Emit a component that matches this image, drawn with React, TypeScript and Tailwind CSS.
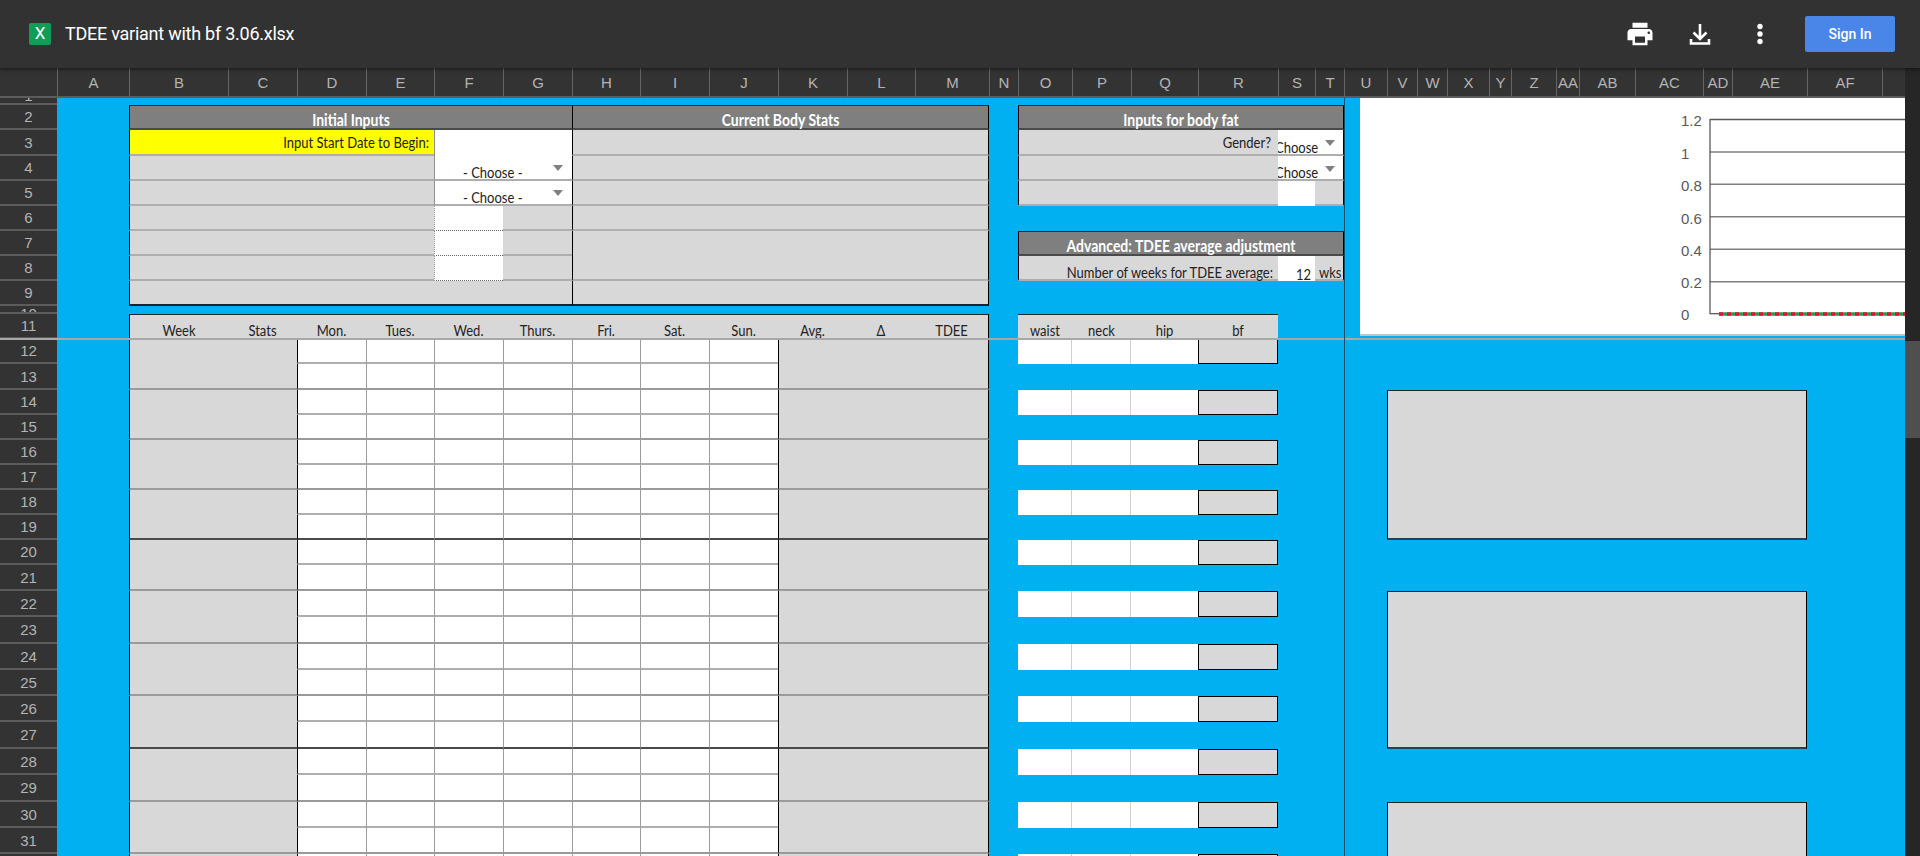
import React from "react";

const COLS =
  "grid-cols-[57px_72px_99px_69px_69px_68px_69px_69px_68px_69px_69px_69px_68px_74px_29px_54px_59px_67px_80px_37px_29px_43px_30px_30px_42px_22px_45px_23px_56px_68px_29px_75px_75px_23px]";
const ROWS =
  "grid-rows-[7px_25px_26px_25px_25px_25px_25px_25px_25px_8px_25px_25px_26px_25px_25px_25px_25px_25px_25px_25px_26px_26px_27px_26px_26px_26px_27px_26px_27px_26px_26px_26px]";

const LETTERS = ["A","B","C","D","E","F","G","H","I","J","K","L","M","N","O","P","Q","R","S","T","U","V","W","X","Y","Z","AA","AB","AC","AD","AE","AF",""];

const LIGHT = "bg-[#d8d8d8]";
const HEAD = "bg-[#7f7f7f]";
const WHITE = "bg-white";
const LINE = "border-b-2 border-b-[#aeaeae]";
const L_BLACK = "border-l border-l-black";
const R_BLACK = "border-r border-r-black";
const T_DARK = "border-t border-t-[#1c2a30]";
const B_DARK = "border-b-2 border-b-[#4a4a4a]";

function Txt({ children, className = "text-[13px]" }: { children: React.ReactNode; className?: string }) {
  return (
    <span className={"inline-block origin-center scale-y-[1.15] whitespace-nowrap font-['Lato',sans-serif] leading-none " + className}>
      {children}
    </span>
  );
}

function Title({ children }: { children: React.ReactNode }) {
  return (
    <div className="flex h-full items-end justify-center pb-[1px]">
      <Txt className="text-[14px] font-bold text-white">{children}</Txt>
    </div>
  );
}

function Caret({ className }: { className: string }) {
  return <span className={"absolute h-0 w-0 border-x-[5px] border-t-[6px] border-x-transparent border-t-[#808080] " + className} />;
}

function WideSelect({ top }: { top: string }) {
  return (
    <div className="relative flex h-full items-end pl-[28px]">
      <Txt className="text-[13px] text-[#222222]">- Choose -</Txt>
      <Caret className={"right-[9px] " + top} />
    </div>
  );
}

function NarrowSelect() {
  return (
    <div className="relative flex h-full items-end overflow-hidden">
      <Txt className="-ml-[3px] text-[13px] text-[#222222]">Choose</Txt>
      <Caret className="right-[8px] top-[10px]" />
    </div>
  );
}

type Merge = { n: number; span: string; node: React.ReactNode };

const MERGED: Record<string, Merge> = {
  "2-2": { n: 6, span: "col-span-6", node: <Title>Initial Inputs</Title> },
  "2-8": { n: 6, span: "col-span-6", node: <Title>Current Body Stats</Title> },
  "2-15": { n: 6, span: "col-span-6", node: <Title>Inputs for body fat</Title> },
  "3-2": {
    n: 4,
    span: "col-span-4",
    node: (
      <div className="flex h-full items-center justify-end pr-[5px]">
        <Txt className="text-[13px] text-[#222222]">Input Start Date to Begin:</Txt>
      </div>
    ),
  },
  "3-6": { n: 2, span: "col-span-2", node: null },
  "4-6": { n: 2, span: "col-span-2", node: <WideSelect top="top-[9px]" /> },
  "5-6": { n: 2, span: "col-span-2", node: <WideSelect top="top-[9px]" /> },
  "3-15": {
    n: 4,
    span: "col-span-4",
    node: (
      <div className="flex h-full items-center justify-end pr-[7px]">
        <Txt className="text-[13px] text-[#222222]">Gender?</Txt>
      </div>
    ),
  },
  "3-19": { n: 2, span: "col-span-2", node: <NarrowSelect /> },
  "4-15": { n: 4, span: "col-span-4", node: null },
  "4-19": { n: 2, span: "col-span-2", node: <NarrowSelect /> },
  "7-15": { n: 6, span: "col-span-6", node: <Title>Advanced: TDEE average adjustment</Title> },
  "8-15": {
    n: 4,
    span: "col-span-4",
    node: (
      <div className="flex h-full items-end justify-end pr-[5px]">
        <Txt className="text-[13px] text-[#222222]">Number of weeks for TDEE average:</Txt>
      </div>
    ),
  },
  "8-19": {
    n: 1,
    span: "",
    node: (
      <div className="flex h-full items-end justify-end pr-[4px]">
        <Txt className="text-[13px] text-[#222222]">12</Txt>
      </div>
    ),
  },
  "8-20": {
    n: 1,
    span: "",
    node: (
      <div className="flex h-full items-end pl-[4px]">
        <Txt className="text-[13px] text-[#222222]">wks</Txt>
      </div>
    ),
  },
};

const HEADERS: Record<number, string> = {
  2: "Week",
  3: "Stats",
  4: "Mon.",
  5: "Tues.",
  6: "Wed.",
  7: "Thurs.",
  8: "Fri.",
  9: "Sat.",
  10: "Sun.",
  11: "Avg.",
  12: "Δ",
  13: "TDEE",
  15: "waist",
  16: "neck",
  17: "hip",
  18: "bf",
};

function initPanel(r: number, c: number, e: number) {
  const out: string[] = [];
  if (r === 2) out.push(HEAD, T_DARK, B_DARK);
  else if (r === 3 && c === 2) out.push("bg-[#ffff00]");
  else if (c === 6 && r <= 8) out.push(WHITE);
  else out.push(LIGHT);

  if (c === 2 || c === 8) out.push(L_BLACK);
  else if (c === 6 && r >= 3 && r <= 8) out.push("border-l border-l-[#8f8f8f]");
  if (e === 13) out.push(R_BLACK);

  if (r === 9) out.push("border-b-2 border-b-[#16242b]");
  else if (r > 2) {
    if (c === 6 && r >= 6) out.push("border-b border-dotted border-b-[#666666]");
    else if (c === 6 && r === 3) out.push("");
    else if (c >= 8 && r === 7) out.push("");
    else out.push(LINE);
  }
  return out;
}

function weekTable(r: number, c: number) {
  const out: string[] = [];
  if (r === 11) out.push(LIGHT, T_DARK);
  else out.push(c >= 4 && c <= 10 ? WHITE : LIGHT);

  if (c === 2 || (r > 11 && (c === 4 || c === 11))) out.push(L_BLACK);
  else if (r > 11 && c >= 5 && c <= 10) out.push("border-l border-l-[#9c9c9c]");
  if (c === 13) out.push(R_BLACK);

  if (r > 11) {
    if (r === 19 || r === 27) out.push(B_DARK);
    else if (r % 2 === 1) out.push("border-b-2 border-b-[#9a9a9a]");
    else if (c >= 4 && c <= 10) out.push(LINE);
  }
  return out;
}

function fatPanels(r: number, c: number, e: number) {
  const out: string[] = [];
  const head = r === 2 || r === 7;
  if (head) out.push(HEAD, T_DARK, B_DARK);
  else if (c === 19) out.push(WHITE);
  else out.push(LIGHT);
  if (c === 15) out.push(L_BLACK);
  if (e === 20) out.push(R_BLACK);
  if (!head && c !== 19) out.push(LINE);
  if (!head && c === 19 && r < 5) out.push(LINE);
  return out;
}

function waistTable(r: number, c: number) {
  const out: string[] = [];
  if (r === 11) out.push(LIGHT, T_DARK);
  else if (r % 2 === 0) {
    if (c === 18) out.push(LIGHT, "border border-black");
    else if (c === 17) out.push(WHITE);
    else out.push(WHITE, "border-r border-r-[#cfcfcf]");
  }
  return out;
}

function grayBox(r: number, c: number) {
  const ranges: [number, number][] = [[14, 19], [22, 27], [30, 40]];
  const range = ranges.find(([a, b]) => r >= a && r <= b);
  if (!range || c < 22 || c > 31) return [];
  const out = [LIGHT];
  if (c === 22) out.push(L_BLACK);
  if (c === 31) out.push(R_BLACK);
  if (r === range[0]) out.push("border-t border-t-[#16242b]");
  if (r === range[1]) out.push("border-b-2 border-b-[#1d4358]");
  return out;
}

function cellClass(r: number, c: number, e: number) {
  let extra: string[] = [];
  if (r >= 2 && r <= 9 && c >= 2 && c <= 13) extra = initPanel(r, c, e);
  else if (r >= 11 && c >= 2 && c <= 13) extra = weekTable(r, c);
  else if (((r >= 2 && r <= 5) || r === 7 || r === 8) && c >= 15 && c <= 20) extra = fatPanels(r, c, e);
  else if (r >= 11 && c >= 15 && c <= 18) extra = waistTable(r, c);
  else extra = grayBox(r, c);
  return extra.join(" ");
}

function sheetCells() {
  const cells: React.ReactNode[] = [];
  for (let r = 1; r <= 32; r++) {
    const align = r === 1 ? "items-end" : r === 10 ? "items-start" : "items-center";
    cells.push(
      <div
        key={`h${r}`}
        className={"flex justify-center overflow-hidden border-b-2 border-b-[#5c5c5c] bg-[#333333] font-['Liberation_Sans',sans-serif] text-[15px] leading-none text-[#b4b4b4] " + align}
      >
        {r}
      </div>
    );
    let c = 1;
    while (c <= 33) {
      const m = MERGED[`${r}-${c}`];
      const n = m ? m.n : 1;
      const header = r === 11 ? HEADERS[c] : undefined;
      cells.push(
        <div key={`${r}-${c}`} className={"min-w-0 " + (m ? m.span + " " : "") + cellClass(r, c, c + n - 1)}>
          {m ? m.node : null}
          {header ? (
            <div className="flex h-full items-end justify-center pb-[2px]">
              <Txt className="text-[13px] text-[#222222]">{header}</Txt>
            </div>
          ) : null}
        </div>
      );
      c += n;
    }
  }
  return cells;
}

function Chart() {
  const grid = [54, 86.3, 118.7, 151.3, 183.7];
  const labels: [string, number][] = [["1.2", 28], ["1", 61], ["0.8", 93], ["0.6", 126], ["0.4", 158], ["0.2", 190], ["0", 222]];
  return (
    <div className="absolute left-[1360px] top-0 h-[238px] w-[545px] border-b-2 border-b-[#b9c6cc] bg-white">
      <svg width="545" height="236" viewBox="0 0 545 236" className="block">
        <line x1="350" y1="21.5" x2="545" y2="21.5" stroke="#595959" strokeWidth="1.5" />
        {grid.map((y) => (
          <line key={y} x1="350" y1={y} x2="545" y2={y} stroke="#7f7f7f" strokeWidth="1.6" />
        ))}
        <line x1="350" y1="21" x2="350" y2="216" stroke="#595959" strokeWidth="1.3" />
        <line x1="350" y1="215.7" x2="359" y2="215.7" stroke="#595959" strokeWidth="1.3" />
        <line x1="359" y1="216" x2="545" y2="216" stroke="#1f9d55" strokeWidth="3.5" />
        <line x1="359" y1="216" x2="545" y2="216" stroke="#f01030" strokeWidth="3.5" strokeDasharray="4 4" />
        {labels.map(([t, y]) => (
          <text key={t} x="321" y={y} fontFamily="'Liberation Sans', sans-serif" fontSize="15" fill="#595959">
            {t}
          </text>
        ))}
      </svg>
    </div>
  );
}

export default function App() {
  return (
    <div className="flex h-[856px] w-[1920px] flex-col overflow-hidden bg-[#262626]">
      <header className="relative z-10 flex h-[68px] shrink-0 items-center bg-[#323232] pl-[29px] pr-[25px] shadow-[0_1px_4px_rgba(0,0,0,0.6)]">
        <div className="flex h-[22px] w-[22px] items-center justify-center rounded-[2px] bg-[#0f9d58] font-['Roboto',sans-serif] text-[17px] text-white">
          X
        </div>
        <h1 className="mb-[2px] ml-[14px] font-['Roboto',sans-serif] text-[18px] font-normal tracking-[-0.25px] text-white">
          TDEE variant with bf 3.06.xlsx
        </h1>
        <div className="ml-auto flex items-center">
          <svg width="30" height="30" viewBox="0 0 24 24" fill="#ffffff" className="mr-[30px]">
            <path d="M19 8H5c-1.66 0-3 1.34-3 3v6h4v4h12v-4h4v-6c0-1.66-1.34-3-3-3zm-3 11H8v-5h8v5zm3-7c-.55 0-1-.45-1-1s.45-1 1-1 1 .45 1 1-.45 1-1 1zm-1-9H6v4h12V3z" />
          </svg>
          <svg width="30" height="30" viewBox="0 0 30 30" fill="none" stroke="#ffffff" strokeWidth="2.6" className="mr-[30px]">
            <path d="M15 5v15M8.5 13.5 15 20l6.500-6.500" />
            <path d="M6 20v4.500h18V20" />
          </svg>
          <svg width="30" height="30" viewBox="0 0 30 30" fill="#ffffff" className="mr-[30px]">
            <circle cx="15" cy="7.500" r="2.700" />
            <circle cx="15" cy="15" r="2.700" />
            <circle cx="15" cy="22.500" r="2.700" />
          </svg>
          <button className="h-[36px] w-[90px] rounded-[2px] bg-[#4a86e8] font-['Roboto',sans-serif] text-[14px] font-medium text-white">
            Sign In
          </button>
        </div>
      </header>

      <div className="flex min-h-0 flex-1">
        <div className="w-[1905px] shrink-0">
          <div className={"grid h-[30px] " + COLS}>
            <div className="border-b-2 border-b-[#5c5c5c] bg-[#333333]" />
            {LETTERS.map((l, i) => (
              <div
                key={i}
                className="flex items-center justify-center overflow-hidden border-b-2 border-b-[#5c5c5c] border-l border-l-[#666666] bg-[#333333] pt-[2px] font-['Liberation_Sans',sans-serif] text-[15px] text-[#b4b4b4]"
              >
                {l}
              </div>
            ))}
          </div>
          <div className={"relative grid bg-[#00b0f0] " + COLS + " " + ROWS}>
            {sheetCells()}
            <Chart />
            <div className="absolute left-0 top-[240px] h-[2px] w-full bg-[#a8a8a8]" />
            <div className="absolute left-[1344px] top-0 h-full w-px bg-[#0d4f70]" />
          </div>
        </div>
        <aside className="flex-1 bg-[#262626] pt-[273px]">
          <div className="h-[97px] bg-[#4f4f4f]" />
        </aside>
      </div>
    </div>
  );
}
